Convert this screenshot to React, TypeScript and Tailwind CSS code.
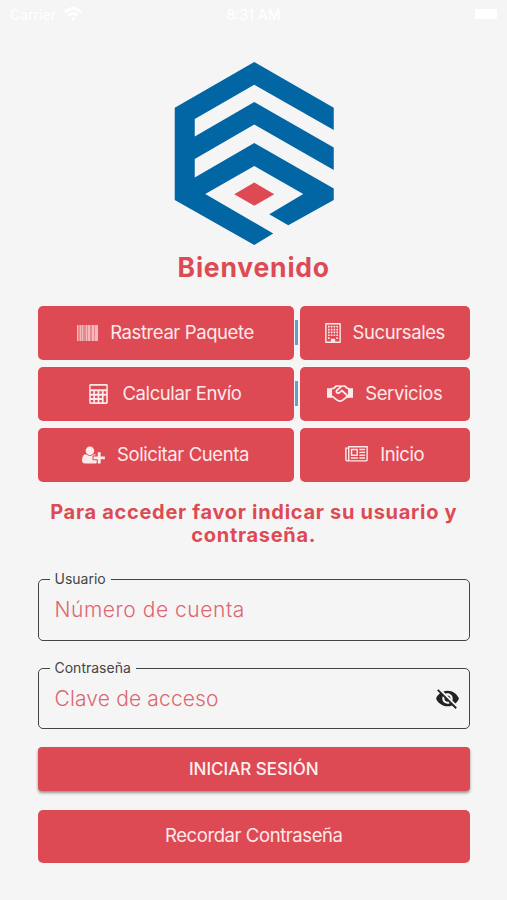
import React from 'react';
import { MdVisibilityOff } from 'react-icons/md';

const Logo = () => (
  <svg viewBox="-0.5 0 159.5 183" className="h-[183px] w-[160px]">
    <path
      fill="#0266a4"
      fillRule="evenodd"
      d="M79.5 0 159 45.8V68L79.5 22.7 20 57v17.5L79.5 40 159 85.500V108L79.500 62.500 20 97v18.500L79.500 81 159 126.500V138L113.500 163.300 94.500 152.300 128.500 132 79.500 104 30.500 132 98.500 171.500 79.500 183 0 138V45.800Z"
    />
    <path fill="#dd4a54" d="m79.500 120.500 20 11.700-20 11.500-20-11.500Z" />
  </svg>
);

const BarcodeIcon = () => (
  <svg viewBox="0 0 21 16" className="h-4 w-[21px]" fill="currentColor">
    <path fillOpacity="0.4" d="M0 0h21v16H0z" />
    <path fillOpacity="0.5" d="M0 0h1v16H0zM3 0h1v16H3zM5 0h1v16H5zM9 0h1v16H9zM11 0h2v16h-2zM15 0h2v16h-2zM18 0h3v16h-3z" />
  </svg>
);

const CalculatorIcon = () => (
  <svg viewBox="0 0 1664 1792" className="h-5 w-[19px]" fill="currentColor">
    <path
      fillRule="evenodd"
      d="M128 0H1536Q1664 0 1664 128V1664Q1664 1792 1536 1792H128Q0 1792 0 1664V128Q0 0 128 0ZM128 150V480H1536V150ZM140 660V880H370V660ZM522 660V880H752V660ZM906 660V880H1136V660ZM1290 660V880H1520V660ZM140 1044V1264H370V1044ZM522 1044V1264H752V1044ZM906 1044V1264H1136V1044ZM1290 1044V1644H1520V1044ZM140 1424V1644H370V1424ZM522 1424V1644H752V1424ZM906 1424V1644H1136V1424Z"
    />
  </svg>
);

const UserPlusIcon = () => (
  <svg viewBox="0 0 2048 1792" className="h-5 w-[23px]" fill="currentColor">
    <path d="M704 896q-159 0-271.5-112.5t-112.5-271.5 112.5-271.5 271.5-112.5 271.5 112.5 112.5 271.5-112.5 271.5-271.5 112.5zm960 128h352q13 0 22.5 9.5t9.5 22.5v192q0 13-9.5 22.5t-22.5 9.5h-352v352q0 13-9.5 22.5t-22.5 9.5h-192q-13 0-22.5-9.5t-9.5-22.5v-352h-352q-13 0-22.5-9.5t-9.5-22.5v-192q0-13 9.5-22.5t22.5-9.5h352v-352q0-13 9.5-22.5t22.5-9.5h192q13 0 22.5 9.5t9.5 22.5v352zm-736 224q0 52 38 90t90 38h256v238q-68 50-171 50h-874q-121 0-194-69t-73-190q0-53 3.5-103.5t14-109 26.5-108.5 43-97.5 62-81 85.5-53.5 111.5-20q19 0 39 17 79 61 154.5 91.5t164.5 30.5 164.5-30.5 154.5-91.5q20-17 39-17 132 0 217 96h-223q-52 0-90 38t-38 90v192z" />
  </svg>
);

const BuildingIcon = () => (
  <svg viewBox="0 0 1408 1792" className="h-5 w-4" fill="currentColor">
    <path
      fillRule="evenodd"
      d="M64 0H1344Q1408 0 1408 64V1728Q1408 1792 1344 1792H64Q0 1792 0 1728V64Q0 0 64 0ZM128 128V1664H512V1408H896V1664H1280V128Z"
    />
    {[256, 512, 768, 1024].map((y) => (
      <path key={y} d={`M256 ${y}h150v150h-150zM505 ${y}h150v150h-150zM754 ${y}h150v150h-150zM1003 ${y}h150v150h-150z`} />
    ))}
    <path d="M256 1280h150v150h-150zM1003 1280h150v150h-150zM560 1430h288v300h-288z" />
  </svg>
);

const HandshakeIcon = () => (
  <svg viewBox="0 0 26 17" className="h-[17px] w-[26px]" fill="none" stroke="currentColor" strokeWidth="1.7" strokeLinejoin="round" strokeLinecap="round">
    <path fill="currentColor" stroke="none" d="M0 3.200h5v9.600H0zM21 3.200h5v9.600h-5z" />
    <path d="M4.500 3.500h2L9.300 1h3.200l1.300.800L15.200 1h2.400l3 2.500h1" />
    <path d="M13.800 1.800 9.700 5.500q-.800 1.600.600 2.400 1.300.600 2.500-.500l2-1.900 5 4.500q.900 1.300-.300 2.200l-4 3q-2 1.300-3.500.700-1.700-.300-3.500-2l-3-2.400h-1" />
    <path d="m19.500 12.200 2-.300" />
  </svg>
);

const NewspaperIcon = () => (
  <svg viewBox="0 128 2048 1536" className="h-[17px] w-[23px]" fill="currentColor">
    <path d="M1024 512h-384v384h384v-384zm128 640v128h-640v-128h640zm0-768v640h-640v-640h640zm640 768v128h-512v-128h512zm0-256v128h-512v-128h512zm0-256v128h-512v-128h512zm0-256v128h-512v-128h512zm-1536 960v-960h-128v960q0 26 19 45t45 19 45-19 19-45zm1664 0v-1088h-1536v1088q0 33-11 64h1483q26 0 45-19t19-45zm128-1216v1216q0 80-56 136t-136 56h-1664q-80 0-136-56t-56-136v-1088h256v-128h1792z" />
  </svg>
);

interface MenuButtonProps {
  icon: React.ReactNode;
  label: string;
  className: string;
}

const MenuButton: React.FC<MenuButtonProps> = ({ icon, label, className }) => (
  <button className={`flex h-[53.500px] items-center justify-center rounded-[5px] bg-[#dd4a54] text-[#fde9e9] ${className}`}>
    {icon}
    <span className="text-[18.500px] tracking-[-0.400px] whitespace-nowrap">{label}</span>
  </button>
);

interface FieldProps {
  label: string;
  placeholder: string;
  className: string;
  inputClass: string;
  children?: React.ReactNode;
}

const Field: React.FC<FieldProps> = ({ label, placeholder, className, inputClass, children }) => (
  <fieldset className={`flex min-w-0 rounded-[5px] border border-[#444] pr-[9px] pl-[11px] ${className}`}>
    <legend className="px-[5px] text-[14px] leading-[16px] text-[#444]">{label}</legend>
    <div className="flex w-full items-center pt-[7px] pl-[5px]">
      <input
        placeholder={placeholder}
        className={`w-0 flex-1 bg-transparent text-[21px] font-light outline-none placeholder:text-[#df6670] ${inputClass}`}
      />
      {children}
    </div>
  </fieldset>
);

export default function App() {
  return (
    <div className="flex h-[900px] w-[507px] flex-col overflow-hidden bg-[#f5f5f5] font-['Inter',sans-serif]">
      <header className="grid h-[28px] grid-cols-3 items-center px-[10px] text-[14px] text-white">
        <div className="flex items-center gap-2">
          <span>Carrier</span>
          <svg viewBox="0 0 18 14" className="h-[14px] w-[18px]" fill="currentColor">
            <path d="M0 4Q9-4 18 4l-2 2Q9 0 2 6ZM3.500 7.500q5.500-5 11 0l-2 2q-3.500-3-7 0ZM7 11q2-2 4 0l-2 3Z" />
          </svg>
        </div>
        <span className="text-center font-medium">8:31 AM</span>
        <div className="h-[10px] w-[22px] justify-self-end rounded-[2px] bg-white" />
      </header>

      <main className="flex flex-col pr-[37px] pl-[37.500px]">
        <div className="mt-[34px] flex flex-col items-center">
          <Logo />
          <h1 className="mt-[5px] text-[26.500px] leading-[34px] font-bold tracking-[0.800px] text-[#dd4a54]">Bienvenido</h1>
        </div>

        <nav className="mt-[22px] flex flex-col gap-[7.500px]">
          <div className="flex items-center">
            <MenuButton className="w-[256px] gap-[12px]" icon={<BarcodeIcon />} label="Rastrear Paquete" />
            <span className="mx-[1.500px] h-[25px] w-[3px] bg-[#6c9dc4]" />
            <MenuButton className="flex-1 gap-[12px]" icon={<BuildingIcon />} label="Sucursales" />
          </div>
          <div className="flex items-center">
            <MenuButton className="w-[256px] gap-[14px]" icon={<CalculatorIcon />} label="Calcular Envío" />
            <span className="mx-[1.500px] h-[25px] w-[3px] bg-[#6c9dc4]" />
            <MenuButton className="flex-1 gap-[12px]" icon={<HandshakeIcon />} label="Servicios" />
          </div>
          <div className="flex items-center gap-[6px]">
            <MenuButton className="w-[256px] gap-[12px]" icon={<UserPlusIcon />} label="Solicitar Cuenta" />
            <MenuButton className="flex-1 gap-[12px]" icon={<NewspaperIcon />} label="Inicio" />
          </div>
        </nav>

        <p className="mt-[19.600px] text-center text-[20px] leading-[23px] font-bold tracking-[0.700px] whitespace-nowrap text-[#dd4a54]">
          Para acceder favor indicar su usuario y<br />contraseña.
        </p>

        <form className="mt-[24px] flex flex-col">
          <Field label="Usuario" placeholder="Número de cuenta" className="h-[70px]" inputClass="tracking-[0.550px]" />
          <Field label="Contraseña" placeholder="Clave de acceso" className="mt-[19px] h-[69px]" inputClass="tracking-[0.150px]">
            <MdVisibilityOff size={25} className="text-[#222]" />
          </Field>
          <button
            type="button"
            className="mt-[18px] h-[44px] rounded-[4px] bg-[#dd4a54] pt-px text-[17px] font-medium text-[#fff0f0] shadow-[0_2px_3px_rgba(0,0,0,0.4)]"
          >
            INICIAR SESIÓN
          </button>
          <button type="button" className="mt-[18.500px] h-[53.500px] rounded-[5px] bg-[#dd4a54] text-[18.500px] tracking-[-0.420px] text-[#fde9e9]">
            Recordar Contraseña
          </button>
        </form>
      </main>
    </div>
  );
}
